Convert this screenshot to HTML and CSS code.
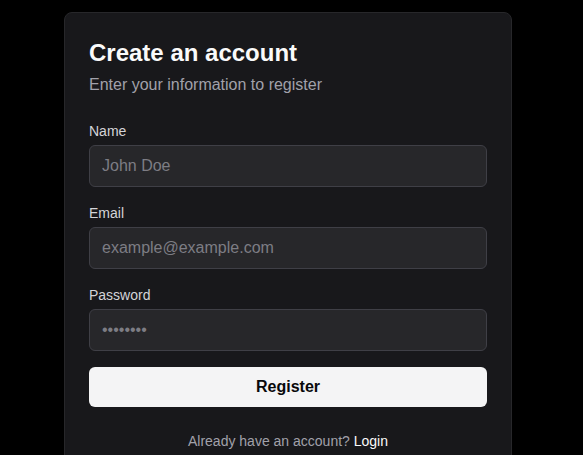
FILE: index.html
```html
<!DOCTYPE html>
<html lang="en">
<head>
<meta charset="utf-8">
<title>Create an account</title>
<link rel="stylesheet" href="styles.css">
</head>
<body>
<main class="page">
  <form class="card">
    <h1 class="title">Create an account</h1>
    <p class="subtitle">Enter your information to register</p>
    <div class="fields">
      <div class="field">
        <label class="label" for="name">Name</label>
        <input class="input" id="name" type="text" placeholder="John Doe">
      </div>
      <div class="field">
        <label class="label" for="email">Email</label>
        <input class="input" id="email" type="email" placeholder="example@example.com">
      </div>
      <div class="field">
        <label class="label" for="password">Password</label>
        <input class="input" id="password" type="password" placeholder="••••••••">
      </div>
    </div>
    <button class="button" type="button">Register</button>
    <p class="footer">Already have an account? <a class="link" href="#">Login</a></p>
  </form>
</main>
</body>
</html>
```
FILE: styles.css
```css
* { box-sizing: border-box; }
html, body { margin: 0; padding: 0; background: #000; }
body { font-family: "Liberation Sans", Arial, sans-serif; color: #fafafa; }
.page { padding: 12px 0 0 64px; }
.card {
  width: 448px;
  background: #18181b;
  border: 1px solid #27272a;
  border-radius: 8px;
  padding: 24px 24px 24px;
  display: flex;
  flex-direction: column;
}
.title { margin: 0; font-size: 24px; line-height: 32px; font-weight: 700; color: #fafafa; }
.subtitle { margin: 4px 0 0; font-size: 16px; line-height: 24px; color: #a1a1aa; }
.fields { margin-top: 24px; display: flex; flex-direction: column; gap: 16px; }
.field { display: flex; flex-direction: column; gap: 4px; }
.label { font-size: 14px; line-height: 20px; color: #d4d4d8; }
.input {
  height: 42px;
  width: 100%;
  background: #27272a;
  border: 1px solid #3f3f46;
  border-radius: 6px;
  padding: 0 12px;
  font-family: inherit;
  font-size: 16px;
  color: #fafafa;
  outline: none;
}
.input::placeholder { color: #7d7d84; opacity: 1; }
.button {
  margin-top: 16px;
  height: 40px;
  border: none;
  border-radius: 6px;
  background: #f4f4f5;
  color: #09090b;
  font-family: inherit;
  font-size: 16px;
  font-weight: 700;
}
.footer { margin: 24px 0 0; text-align: center; font-size: 14px; line-height: 20px; color: #a1a1aa; }
.link { color: #fafafa; text-decoration: none; }
```
